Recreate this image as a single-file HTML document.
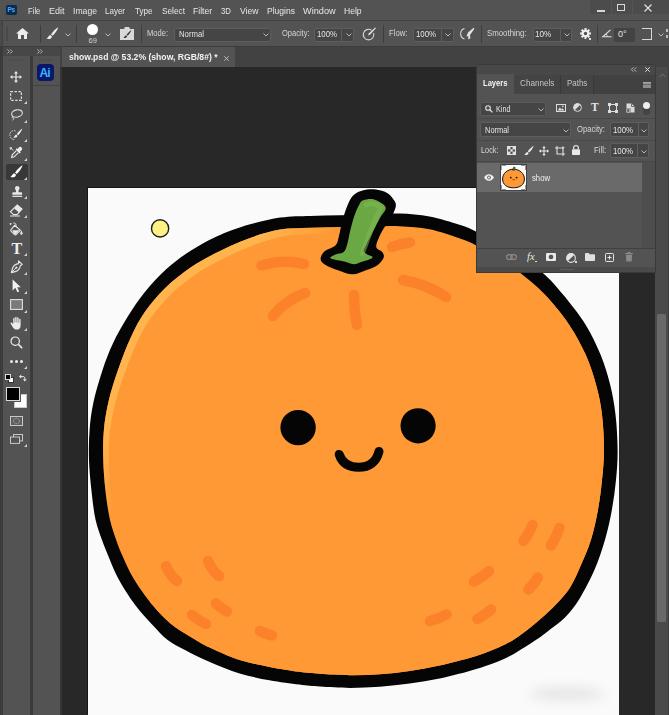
<!DOCTYPE html>
<html><head><meta charset="utf-8"><title>show.psd</title>
<style>
*{box-sizing:border-box;margin:0;padding:0}
html,body{width:669px;height:715px;overflow:hidden;background:#282828}
body{position:relative;font-family:"Liberation Sans",sans-serif;color:#dcdcdc;font-size:9.5px}
.abs{position:absolute}
.t{position:absolute;white-space:nowrap;line-height:1}
svg{position:absolute;overflow:visible}
.fld{position:absolute;background:#454545;border:1px solid #5e5e5e;border-radius:2px}
.sep{position:absolute;width:1px;background:#3e3e3e}
</style></head><body>
<!-- MENU BAR -->
<div class="abs" style="left:0;top:0;width:669px;height:20px;background:#535353"></div>
<div class="abs" style="left:6px;top:5px;width:11px;height:10px;background:#0b2a4e;border-radius:2px"></div>
<div class="t" style="left:7.5px;top:7px;font-size:6.5px;font-weight:bold;color:#48a8ff;letter-spacing:-.3px">Ps</div>
<div class="t" style="top:5.5px;left:28px;font-size:9.6px;color:#e6e6e6;word-spacing:0;transform:scaleX(0.800);transform-origin:0 50%">File</div>
<div class="t" style="top:5.5px;left:49px;font-size:9.6px;color:#e6e6e6;transform:scaleX(0.939);transform-origin:0 50%">Edit</div>
<div class="t" style="top:5.5px;left:73px;font-size:9.6px;color:#e6e6e6;transform:scaleX(0.899);transform-origin:0 50%">Image</div>
<div class="t" style="top:5.5px;left:105px;font-size:9.6px;color:#e6e6e6;transform:scaleX(0.833);transform-origin:0 50%">Layer</div>
<div class="t" style="top:5.5px;left:135px;font-size:9.6px;color:#e6e6e6;transform:scaleX(0.841);transform-origin:0 50%">Type</div>
<div class="t" style="top:5.5px;left:162px;font-size:9.6px;color:#e6e6e6;transform:scaleX(0.861);transform-origin:0 50%">Select</div>
<div class="t" style="top:5.5px;left:193px;font-size:9.6px;color:#e6e6e6;transform:scaleX(0.892);transform-origin:0 50%">Filter</div>
<div class="t" style="top:5.5px;left:221px;font-size:9.6px;color:#e6e6e6;transform:scaleX(0.813);transform-origin:0 50%">3D</div>
<div class="t" style="top:5.5px;left:240px;font-size:9.6px;color:#e6e6e6;transform:scaleX(0.898);transform-origin:0 50%">View</div>
<div class="t" style="top:5.5px;left:267px;font-size:9.6px;color:#e6e6e6;transform:scaleX(0.889);transform-origin:0 50%">Plugins</div>
<div class="t" style="top:5.5px;left:303px;font-size:9.6px;color:#e6e6e6;transform:scaleX(0.956);transform-origin:0 50%">Window</div>
<div class="t" style="top:5.5px;left:344px;font-size:9.6px;color:#e6e6e6;transform:scaleX(0.893);transform-origin:0 50%">Help</div>
<!-- window buttons -->
<div class="abs" style="left:590px;top:0;width:79px;height:14px;background:#4c4c4c"></div>
<div class="abs" style="left:611px;top:0;width:1px;height:14px;background:#555"></div><div class="abs" style="left:632px;top:0;width:1px;height:14px;background:#555"></div>
<div class="abs" style="left:597px;top:10px;width:8px;height:2px;background:#d8d8d8"></div>
<div class="abs" style="left:617px;top:4px;width:8px;height:7px;border:1.5px solid #d8d8d8"></div>
<svg style="left:644px;top:4px" width="8" height="8" viewBox="0 0 8 8"><path d="M.5 .5L7.5 7.5M7.5 .5L.5 7.5" stroke="#e0e0e0" stroke-width="1.2" fill="none"/></svg>

<!-- OPTIONS BAR -->
<div class="abs" style="left:0;top:20px;width:669px;height:27px;background:#535353;border-top:1px solid #424242;border-bottom:1px solid #3c3c3c"></div>
<div class="abs" style="left:0;top:21px;width:2.500px;height:25px;background:#4a4a4a;border-right:1px solid #424242"></div>
<div class="abs" style="left:6px;top:26.500px;width:1.500px;height:14px;background:#494949"></div>
<!-- home -->
<svg style="left:16px;top:28px" width="13" height="11" viewBox="0 0 13 11"><path d="M6.5 0L13 5.6H11V11H8V7H5V11H2V5.6H0Z" fill="#ececec"/></svg>
<div class="sep" style="left:40px;top:25px;height:18px"></div>
<!-- brush tool icon -->
<svg style="left:46px;top:27px" width="13" height="13" viewBox="0 0 13 13"><path d="M12.3 .3C10 1.5 6.5 5 5 7.4L6.6 8.8C8.8 7 11.6 3 12.3 .3Z" fill="#ececec"/><path d="M4.3 8.1C2.5 8.3 2.6 10.6 .5 11.6C2.6 12.6 5.6 12 5.9 9.5Z" fill="#ececec"/></svg>
<svg style="left:65px;top:33px" width="6" height="4" viewBox="0 0 6 4"><path d="M.5 .5L3 3L5.5 .5" stroke="#b8b8b8" stroke-width="1" fill="none"/></svg>
<div class="sep" style="left:76px;top:25px;height:18px"></div>
<!-- brush preset -->
<div class="abs" style="left:87px;top:24px;width:11px;height:11px;border-radius:50%;background:#fff"></div>
<div class="t" style="left:88.5px;top:37px;font-size:7.5px;color:#d0d0d0">69</div>
<svg style="left:105px;top:33px" width="6" height="4" viewBox="0 0 6 4"><path d="M.5 .5L3 3L5.5 .5" stroke="#b8b8b8" stroke-width="1" fill="none"/></svg>
<!-- brush settings icon -->
<svg style="left:120px;top:27px" width="14" height="13" viewBox="0 0 14 13"><path d="M0 2H4L5 0H9L10 2H14V13H0Z" fill="#d9d9d9"/><path d="M11.5 3C9.8 4 7.6 6.2 6.6 7.8L7.6 8.7C9.2 7.4 11 5 11.5 3ZM6 8.3C4.8 8.4 4.9 10 3.4 10.7C4.9 11.3 6.9 10.9 7.1 9.2Z" fill="#3c3c3c"/></svg>
<div class="sep" style="left:141px;top:25px;height:18px"></div>
<div class="t" style="left:147px;top:29px;font-size:9px;color:#d6d6d6;transform:scaleX(0.840);transform-origin:0 50%">Mode:</div>
<div class="fld" style="left:174px;top:27.500px;width:97px;height:14px"></div>
<div class="t" style="left:179px;top:29.5px;font-size:9px;color:#e4e4e4;transform:scaleX(0.862);transform-origin:0 50%">Normal</div>
<svg style="left:263px;top:33px" width="6" height="4" viewBox="0 0 6 4"><path d="M.5 .5L3 3L5.5 .5" stroke="#b8b8b8" stroke-width="1" fill="none"/></svg>
<div class="t" style="left:282px;top:29px;font-size:9px;color:#d6d6d6;transform:scaleX(0.833);transform-origin:0 50%">Opacity:</div>
<div class="fld" style="left:314px;top:27.500px;width:28px;height:14px;border-radius:2px 0 0 2px"></div>
<div class="fld" style="left:342px;top:27.500px;width:12px;height:14px;border-left:0;border-radius:0 2px 2px 0"></div>
<div class="t" style="left:317px;top:29.5px;font-size:9px;color:#e4e4e4;transform:scaleX(0.870);transform-origin:0 50%">100%</div>
<svg style="left:346px;top:33px" width="6" height="4" viewBox="0 0 6 4"><path d="M.5 .5L3 3L5.5 .5" stroke="#b8b8b8" stroke-width="1" fill="none"/></svg>
<!-- pressure opacity icon -->
<svg style="left:362px;top:27px" width="14" height="14" viewBox="0 0 14 14"><path d="M9.5 3.2A5.3 5.3 0 1 0 11.6 6" stroke="#d6d6d6" stroke-width="1.1" fill="none"/><path d="M13.2 .4L7 6.3L5.9 8.6L8.2 7.6L13.9 1.3Z" fill="#e6e6e6"/></svg>
<div class="sep" style="left:383px;top:25px;height:18px"></div>
<div class="t" style="left:389px;top:29px;font-size:9px;color:#d6d6d6;transform:scaleX(0.856);transform-origin:0 50%">Flow:</div>
<div class="fld" style="left:413px;top:27.500px;width:29px;height:14px;border-radius:2px 0 0 2px"></div>
<div class="fld" style="left:442px;top:27.500px;width:12px;height:14px;border-left:0;border-radius:0 2px 2px 0"></div>
<div class="t" style="left:416px;top:29.5px;font-size:9px;color:#e4e4e4;transform:scaleX(0.874);transform-origin:0 50%">100%</div>
<svg style="left:445px;top:33px" width="6" height="4" viewBox="0 0 6 4"><path d="M.5 .5L3 3L5.5 .5" stroke="#b8b8b8" stroke-width="1" fill="none"/></svg>
<!-- airbrush icon -->
<svg style="left:459px;top:27px" width="16" height="14" viewBox="0 0 16 14"><path d="M5.5 1.5A5.5 5.5 0 0 0 5.5 12" stroke="#d6d6d6" stroke-width="1.1" fill="none"/><path d="M14.6 .8L9 5.6L7.4 9.6L9.6 9.2L9 12.2L11.4 11.6L11 8L15.4 1.8Z" fill="#e2e2e2"/></svg>
<div class="sep" style="left:481px;top:25px;height:18px"></div>
<div class="t" style="left:487px;top:29px;font-size:9px;color:#d6d6d6;transform:scaleX(0.870);transform-origin:0 50%">Smoothing:</div>
<div class="fld" style="left:533px;top:27.500px;width:28px;height:14px;border-radius:2px 0 0 2px"></div>
<div class="fld" style="left:561px;top:27.500px;width:11px;height:14px;border-left:0;border-radius:0 2px 2px 0"></div>
<div class="t" style="left:535px;top:29.5px;font-size:9px;color:#e4e4e4;transform:scaleX(0.911);transform-origin:0 50%">10%</div>
<svg style="left:563.5px;top:33px" width="6" height="4" viewBox="0 0 6 4"><path d="M.5 .5L3 3L5.5 .5" stroke="#b8b8b8" stroke-width="1" fill="none"/></svg>
<!-- gear -->
<svg style="left:580px;top:28px" width="11" height="11" viewBox="-5.5 -5.5 11 11"><g fill="#f0f0f0"><circle r="3.6"/><rect x="-1.1" y="-5.4" width="2.2" height="10.8"/><rect x="-1.1" y="-5.4" width="2.2" height="10.8" transform="rotate(45)"/><rect x="-1.1" y="-5.4" width="2.2" height="10.8" transform="rotate(90)"/><rect x="-1.1" y="-5.4" width="2.2" height="10.8" transform="rotate(135)"/></g><circle r="1.7" fill="#535353"/></svg>
<div class="abs" style="left:589px;top:38px;width:2px;height:2px;background:#e0e0e0"></div>
<div class="sep" style="left:597px;top:25px;height:18px"></div>
<!-- angle -->
<svg style="left:602px;top:29px" width="10" height="9" viewBox="0 0 10 9"><path d="M8.5 .8L.8 7.8H9.6" stroke="#e0e0e0" stroke-width="1.1" fill="none"/><path d="M5.2 7.8A3.6 3.6 0 0 0 4 4.9" stroke="#e0e0e0" stroke-width=".9" fill="none"/></svg>
<div class="abs" style="left:614px;top:27.500px;width:21px;height:14px;background:#434343;border-radius:2px"></div>
<div class="t" style="left:618px;top:29.5px;font-size:9px;color:#e4e4e4">0°</div>
<div class="abs" style="left:642px;top:28px;width:9.500px;height:11.500px;border:1.500px solid #d8d8d8;border-left:0"></div>
<svg style="left:658px;top:33px" width="6" height="4" viewBox="0 0 6 4"><path d="M.5 .5L3 3L5.5 .5" stroke="#b8b8b8" stroke-width="1" fill="none"/></svg>
<div class="abs" style="left:666px;top:29px;width:1.500px;height:3px;background:#bbb"></div>
<div class="abs" style="left:666px;top:35px;width:1.500px;height:3px;background:#bbb"></div>

<!-- TAB BAR -->
<div class="abs" style="left:0;top:47px;width:669px;height:20px;background:#424242"></div>
<div class="abs" style="left:62px;top:47px;width:172.500px;height:20px;background:#535353"></div>
<div class="t" style="left:69px;top:53px;font-size:9.2px;font-weight:bold;color:#f2f2f2;transform:scaleX(0.938);transform-origin:0 50%">show.psd @ 53.2% (show, RGB/8#) *</div>
<svg style="left:223.500px;top:55.500px" width="5" height="5" viewBox="0 0 5 5"><path d="M.3 .3L4.7 4.7M4.7 .3L.3 4.7" stroke="#c8c8c8" stroke-width=".9" fill="none"/></svg>
<!-- LEFT TOOLBARS -->
<div class="abs" style="left:0;top:47px;width:60px;height:668px;background:#3b3b3b"></div>
<div class="abs" style="left:3px;top:47px;width:27px;height:668px;background:#535353"></div>
<div class="abs" style="left:32.500px;top:47px;width:27px;height:668px;background:#535353"></div>
<div class="abs" style="left:3px;top:47px;width:57px;height:8.500px;background:#474747"></div>
<svg style="left:7px;top:49px" width="6" height="5" viewBox="0 0 6 5"><path d="M.4 .4L2.4 2.5L.4 4.6M3.2 .4L5.2 2.5L3.2 4.6" stroke="#cfcfcf" stroke-width=".8" fill="none"/></svg>
<svg style="left:36.5px;top:49px" width="6" height="5" viewBox="0 0 6 5"><path d="M.4 .4L2.4 2.5L.4 4.6M3.2 .4L5.2 2.5L3.2 4.6" stroke="#cfcfcf" stroke-width=".8" fill="none"/></svg>
<div class="abs" style="left:9px;top:59px;width:14px;height:2px;background:#4e4e4e"></div>
<div class="abs" style="left:39px;top:59px;width:14px;height:2px;background:#4e4e4e"></div>
<!-- AI plugin icon -->
<div class="abs" style="left:37px;top:64px;width:17px;height:17px;border-radius:4px;background:#08176a"></div>
<div class="t" style="left:39.5px;top:66.5px;font-size:12px;font-weight:bold;color:#35b4ff;letter-spacing:-.8px">Ai</div>
<div class="abs" style="left:32.500px;top:84.500px;width:27px;height:1px;background:#444"></div>

<!-- move -->
<svg style="left:10px;top:71px" width="12" height="12" viewBox="0 0 12 12"><path d="M6 1V11M1 6H11" stroke="#e8e8e8" stroke-width="1.2"/><path d="M6 0L8 2.4H4ZM6 12L4 9.6H8ZM0 6L2.4 4V8ZM12 6L9.6 8V4Z" fill="#e8e8e8"/></svg>
<!-- marquee -->
<svg style="left:10px;top:91px" width="12" height="10" viewBox="0 0 12 10"><rect x=".6" y=".6" width="10.8" height="8.8" fill="none" stroke="#e0e0e0" stroke-width="1.2" stroke-dasharray="2.4 1.5"/></svg>
<!-- lasso -->
<svg style="left:10px;top:109px" width="13" height="12" viewBox="0 0 13 12"><ellipse cx="7" cy="4.4" rx="5.4" ry="3.6" fill="none" stroke="#e0e0e0" stroke-width="1.1" transform="rotate(-12 7 4.4)"/><path d="M3 7.2C1.6 7.6 2 9.2 3.2 8.8C4.2 8.4 3.8 10.4 2.6 11.4" fill="none" stroke="#e0e0e0" stroke-width="1"/></svg>
<!-- quick select -->
<svg style="left:9px;top:128px" width="14" height="13" viewBox="0 0 14 13"><path d="M6.5 3A4 4.4 0 1 0 6 11.2" fill="none" stroke="#d8d8d8" stroke-width="1" stroke-dasharray="1.6 1"/><path d="M13.4 .6C11.6 1.6 9 4.2 7.8 6L9.2 7.2C10.8 5.8 12.8 2.8 13.4 .6Z" fill="#ececec"/><path d="M7.2 6.6C5.8 6.8 5.9 8.6 4.4 9.4C6 10.2 8.3 9.7 8.5 7.8Z" fill="#ececec"/></svg>
<!-- eyedropper -->
<svg style="left:9px;top:146px" width="14" height="14" viewBox="0 0 14 14"><path d="M12.6 1.4C11.6 .4 10.3 .8 9.6 1.8L8.6 3L7.8 2.2L6.6 3.4L10.6 7.4L11.8 6.2L11 5.4L12.2 4.4C13.2 3.7 13.6 2.4 12.6 1.4Z" fill="#ececec"/><path d="M7.4 4.6L3.2 8.8L2.6 11.4L5.2 10.8L9.4 6.6" fill="none" stroke="#ececec" stroke-width="1.1"/><path d="M.6 1.2L3.4 1.6L1.2 4Z" fill="#ececec"/><path d="M2 2.4L4.4 4.6" stroke="#ececec" stroke-width=".9"/></svg>
<!-- brush (selected) -->
<div class="abs" style="left:6px;top:164px;width:22px;height:16px;background:#383838;border-radius:2px"></div>
<svg style="left:10px;top:165px" width="13" height="13" viewBox="0 0 13 13"><path d="M12.6 .2C10.2 1.4 6.6 5 5 7.6L6.6 9C8.9 7.2 11.8 3 12.6 .2Z" fill="#ffffff"/><path d="M4.3 8.3C2.4 8.5 2.6 10.8 .4 11.9C2.6 12.9 5.7 12.3 6 9.7Z" fill="#ffffff"/></svg>
<!-- stamp -->
<svg style="left:11.500px;top:185.500px" width="10.500" height="11.500" viewBox="0 0 12 13"><path d="M6 0C4.3 0 3.4 1.2 3.4 2.4C3.4 3.8 4.6 4.4 4.6 6V7H1.4C.8 7 .4 7.4 .4 8V10H11.6V8C11.6 7.4 11.2 7 10.6 7H7.4V6C7.4 4.4 8.6 3.8 8.6 2.4C8.6 1.2 7.7 0 6 0Z" fill="#e8e8e8"/><rect x=".4" y="11" width="11.2" height="1.4" fill="#e8e8e8"/></svg>
<!-- eraser -->
<svg style="left:9px;top:204px" width="14" height="13" viewBox="0 0 14 13"><path d="M8.2 1L13 5L8 10.6H4.6L1.4 7.8Z" fill="none" stroke="#e8e8e8" stroke-width="1.1"/><path d="M8.2 1L13 5L10 8.4L5.2 4.4Z" fill="#e8e8e8"/><path d="M1 12H11" stroke="#e8e8e8" stroke-width="1"/></svg>
<!-- bucket -->
<svg style="left:9px;top:222px" width="14" height="14" viewBox="0 0 14 14"><path d="M5.6 3.4L11.4 8.4L7.4 12.4C6.8 13 6 13 5.4 12.4L2.2 9.4C1.6 8.8 1.6 8 2.2 7.4Z" fill="none" stroke="#e8e8e8" stroke-width="1.1"/><path d="M3 8.2H10.6L7 12L5.6 12.2Z" fill="#e8e8e8"/><path d="M4.4 1.2C6 .2 7.4 2 7 5" fill="none" stroke="#e8e8e8" stroke-width="1"/><path d="M12.4 8.6C12.4 8.6 13.6 10.6 13.6 11.6A1.2 1.2 0 0 1 11.2 11.6C11.2 10.6 12.4 8.6 12.4 8.6Z" fill="#e8e8e8"/><path d="M.6 1L3 1.4L1.2 3.4Z" fill="#e8e8e8"/></svg>
<!-- type -->
<div class="t" style="left:11.5px;top:240.5px;font-family:'Liberation Serif',serif;font-weight:bold;font-size:16px;color:#ececec">T</div>
<!-- pen -->
<svg style="left:10px;top:260px" width="13" height="14" viewBox="0 0 13 14"><path d="M8.6 .8L12.2 4.4L10.4 5.4C10 8 8.6 10.4 6 11.4L1.4 12.6L2.6 8C3.6 5.4 6 4 8.6 3.6Z" fill="none" stroke="#e8e8e8" stroke-width="1.1" stroke-linejoin="round"/><path d="M1.6 12.4L6 8" stroke="#e8e8e8" stroke-width="1"/><circle cx="6.4" cy="7.6" r="1.1" fill="#e8e8e8"/></svg>
<!-- path select arrow -->
<svg style="left:12px;top:279px" width="9" height="14" viewBox="0 0 9 14"><path d="M.6 .6V11.4L3.4 8.8L5.4 13.2L7.2 12.4L5.2 8.2H8.8Z" fill="#f2f2f2"/></svg>
<!-- rectangle -->
<svg style="left:10px;top:299px" width="13" height="11" viewBox="0 0 13 11"><rect x=".6" y=".6" width="11.8" height="9.8" fill="#7a7a7a" stroke="#e0e0e0" stroke-width="1.1"/></svg>
<!-- hand -->
<svg style="left:10px;top:316px" width="13" height="14" viewBox="0 0 13 14"><path d="M3.2 8V2.6C3.2 1.6 4.6 1.6 4.6 2.6V6.4H5.2V1.4C5.2 .4 6.6 .4 6.6 1.4V6.4H7.2V2C7.2 1 8.6 1 8.6 2V6.8H9.2V3.6C9.2 2.6 10.6 2.6 10.6 3.6V9.4C10.6 12 9.2 13.6 6.8 13.6C4.8 13.6 3.8 12.8 2.8 11.2L.6 7.6C.2 6.8 1.2 6.2 1.8 6.8Z" fill="#ececec"/></svg>
<!-- zoom -->
<svg style="left:10px;top:336px" width="13" height="13" viewBox="0 0 13 13"><circle cx="5.2" cy="5.2" r="4.2" fill="none" stroke="#ececec" stroke-width="1.2"/><path d="M8.4 8.4L12.2 12.2" stroke="#ececec" stroke-width="1.6"/></svg>
<!-- dots -->
<div class="abs" style="left:9.500px;top:359.500px;width:3px;height:3px;border-radius:50%;background:#ececec"></div>
<div class="abs" style="left:14.500px;top:359.500px;width:3px;height:3px;border-radius:50%;background:#ececec"></div>
<div class="abs" style="left:19.500px;top:359.500px;width:3px;height:3px;border-radius:50%;background:#ececec"></div>
<!-- default/swap -->
<div class="abs" style="left:8px;top:377px;width:6px;height:6px;background:#fff;border:1px solid #333"></div>
<div class="abs" style="left:5px;top:374px;width:6px;height:6px;background:#000;border:.6px solid #ddd"></div>
<svg style="left:19px;top:374px" width="8" height="8" viewBox="0 0 8 8"><path d="M1.4 2.6H4.4C5.6 2.6 5.8 3.4 5.8 5.4" fill="none" stroke="#ececec" stroke-width="1"/><path d="M0 2.6L2.2 .6V4.6ZM5.8 7.6L3.9 5.2H7.7Z" fill="#ececec"/></svg>
<!-- fg/bg colors -->
<div class="abs" style="left:14px;top:394px;width:13px;height:14px;background:#fff;border:1px solid #c8c8c8"></div>
<div class="abs" style="left:6px;top:387px;width:14px;height:14px;background:#000;border:1px solid #d8d8d8;box-shadow:0 0 0 1px #535353"></div>
<!-- quick mask -->
<svg style="left:10px;top:416px" width="13" height="10" viewBox="0 0 13 10"><rect x=".5" y=".5" width="12" height="9" fill="#5e5e5e" stroke="#c8c8c8" stroke-width="1"/><ellipse cx="6.5" cy="5" rx="3" ry="2.6" fill="none" stroke="#c8c8c8" stroke-width=".8" stroke-dasharray="1 .8"/></svg>
<!-- screen mode -->
<svg style="left:10px;top:434px" width="13" height="10" viewBox="0 0 13 10"><rect x="3.5" y=".5" width="9" height="6.4" fill="none" stroke="#c8c8c8" stroke-width="1"/><rect x=".5" y="3" width="9" height="6.4" fill="#535353" stroke="#c8c8c8" stroke-width="1"/></svg>
<!-- small corner triangles -->
<svg style="left:0;top:0" width="32" height="460" viewBox="0 0 32 460"><g fill="#d0d0d0"><path d="M27 101v3h-3z"/><path d="M27 120v3h-3z"/><path d="M27 139v3h-3z"/><path d="M27 158v3h-3z"/><path d="M27 177v3h-3z"/><path d="M27 196v3h-3z"/><path d="M27 215v3h-3z"/><path d="M27 253v3h-3z"/><path d="M27 272v3h-3z"/><path d="M27 291v3h-3z"/><path d="M27 310v3h-3z"/><path d="M27 328v3h-3z"/><path d="M27 366v3h-3z"/><path d="M27 444v3h-3z"/></g></svg>
<!-- CANVAS -->
<div class="abs" style="left:60px;top:67px;width:595px;height:648px;background:#282828;border-left:2px solid #363636"></div>
<div class="abs" style="left:88px;top:188px;width:530.500px;height:527px;background:#fafafa;box-shadow:-1px -1px 0 #151515"></div>
<svg style="left:0;top:0" width="669" height="715" viewBox="0 0 669 715">
<defs>
<clipPath id="doc"><rect x="88" y="188" width="530.5" height="527"/></clipPath>
<clipPath id="bodyclip"><path d="M280.0 229.6C290.4 227.8 300.0 228.2 310.0 227.8C320.0 227.4 330.0 227.2 340.0 227.0C350.0 226.8 360.1 226.6 370.0 226.5C379.9 226.4 389.7 225.8 399.6 226.3C409.5 226.8 419.5 227.3 429.5 229.3C439.5 231.3 451.7 235.7 459.4 238.3C467.1 241.0 469.4 242.0 475.8 245.2C482.2 248.4 490.7 253.0 498.0 257.5C505.3 262.0 511.9 266.2 519.8 272.4C527.7 278.6 537.0 286.1 545.2 294.8C553.4 303.5 562.4 314.7 569.1 324.7C575.8 334.7 581.1 344.6 585.6 354.6C590.1 364.6 593.3 374.5 596.0 384.5C598.7 394.5 600.7 403.5 602.0 414.4C603.3 425.3 604.0 439.1 604.0 450.0C604.0 460.9 603.0 470.0 602.0 480.0C601.0 490.0 599.8 499.9 598.0 509.8C596.2 519.8 593.9 530.3 591.0 539.7C588.1 549.1 583.9 558.2 580.5 566.0C577.1 573.8 574.3 580.5 570.7 586.4C567.1 592.3 563.0 596.7 558.8 601.4C554.6 606.1 550.0 610.4 545.3 614.8C540.6 619.1 535.1 623.7 530.4 627.5C525.7 631.3 521.2 634.7 517.0 637.5C512.8 640.3 509.5 642.3 505.0 644.5C500.5 646.7 495.9 648.6 490.0 650.9C484.1 653.1 477.9 655.6 469.5 658.0C461.1 660.4 449.6 663.3 439.6 665.5C429.6 667.7 419.7 669.5 409.7 671.0C399.7 672.5 389.8 673.6 379.8 674.3C369.9 675.0 360.0 675.3 350.0 675.2C340.0 675.1 328.4 674.4 320.0 673.8C311.6 673.2 307.8 672.9 299.4 671.8C291.0 670.6 279.5 668.9 269.5 666.9C259.5 664.9 249.6 663.2 239.6 660.0C229.6 656.8 218.0 651.4 209.7 647.5C201.4 643.6 196.5 640.4 190.0 636.4C183.5 632.4 176.6 628.6 170.7 623.7C164.8 618.9 159.2 612.8 154.3 607.3C149.5 601.8 145.6 596.5 141.6 590.8C137.6 585.1 133.7 578.9 130.4 572.9C127.2 566.9 124.5 560.5 122.1 555.0C119.7 549.5 118.2 545.9 116.2 540.0C114.2 534.1 111.7 527.9 109.9 519.6C108.1 511.3 106.5 499.9 105.4 490.0C104.3 480.1 103.5 470.0 103.3 460.0C103.0 450.0 103.0 440.0 103.9 430.0C104.8 420.0 106.4 410.4 108.9 400.0C111.4 389.6 115.2 377.8 118.9 367.4C122.6 357.0 126.5 346.7 130.8 337.5C135.1 328.3 139.1 320.3 144.8 312.1C150.5 303.9 157.3 295.7 165.0 288.2C172.7 280.7 182.2 273.3 191.0 267.3C199.8 261.3 208.1 257.0 217.5 252.3C226.9 247.6 237.0 242.7 247.4 238.9C257.8 235.1 269.6 231.4 280.0 229.6Z"/></clipPath>
<filter id="soft" x="-30%" y="-60%" width="160%" height="220%"><feGaussianBlur stdDeviation="6"/></filter>
<filter id="soft2" x="-10%" y="-10%" width="120%" height="120%"><feGaussianBlur stdDeviation=".7"/></filter>
<linearGradient id="rimfade" gradientUnits="userSpaceOnUse" x1="0" y1="0" x2="393" y2="309.500"><stop offset="0" stop-color="#fff"/><stop offset=".7" stop-color="#fff"/><stop offset=".82" stop-color="#000"/></linearGradient>
<mask id="rimmask" maskUnits="userSpaceOnUse" x="0" y="0" width="669" height="715"><rect x="0" y="0" width="669" height="715" fill="url(#rimfade)"/></mask>
</defs>
<g clip-path="url(#doc)">
<!-- faint shadow bottom right -->
<ellipse cx="567" cy="694" rx="38" ry="7" fill="#e6e6e6" filter="url(#soft)"/>
<!-- body -->
<path d="M280.0 217.6C291.4 215.8 300.0 216.3 310.0 215.9C320.0 215.5 330.0 215.6 340.0 215.3C350.0 215.1 360.1 214.7 370.0 214.4C379.9 214.1 389.7 213.2 399.6 213.5C409.5 213.8 419.5 214.6 429.5 216.5C439.5 218.4 451.7 222.3 459.4 224.8C467.1 227.3 467.4 227.3 475.8 231.4C484.2 235.5 498.9 242.7 510.0 249.5C521.1 256.3 533.3 264.8 542.2 272.4C551.1 279.9 556.0 286.1 563.2 294.8C570.4 303.5 579.4 314.7 585.6 324.7C591.8 334.7 596.4 344.6 600.5 354.6C604.6 364.6 607.6 374.5 610.1 384.5C612.6 394.5 614.2 403.5 615.5 414.4C616.8 425.3 617.5 439.1 617.6 450.0C617.7 460.9 617.0 470.0 616.0 480.0C615.0 490.0 613.7 499.9 611.9 509.8C610.1 519.8 607.9 529.7 605.0 539.7C602.1 549.7 598.8 559.8 594.6 569.6C590.4 579.4 584.7 590.4 579.7 598.4C574.7 606.4 569.7 612.6 564.7 617.8C559.8 623.0 554.2 626.2 550.0 629.5C545.8 632.8 544.8 634.0 539.3 637.8C533.8 641.5 522.7 648.5 517.0 652.0C511.3 655.5 509.5 656.4 505.0 658.5C500.5 660.6 495.9 662.3 490.0 664.4C484.1 666.5 477.9 668.6 469.5 671.0C461.1 673.4 449.6 676.4 439.6 678.5C429.6 680.6 419.7 682.2 409.7 683.6C399.7 685.0 389.8 686.1 379.8 686.8C369.9 687.5 360.0 687.9 350.0 687.9C340.0 687.9 328.4 687.1 320.0 686.6C311.6 686.1 307.8 685.7 299.4 684.6C291.0 683.5 279.5 682.2 269.5 680.3C259.5 678.4 249.6 676.4 239.6 673.4C229.6 670.4 218.8 665.9 209.7 662.0C200.6 658.1 192.0 653.7 185.0 650.0C178.0 646.3 173.1 644.1 167.7 640.0C162.3 635.9 157.5 630.2 152.8 625.2C148.1 620.2 143.5 615.5 139.3 610.3C135.1 605.1 131.2 599.8 127.4 593.8C123.6 587.8 119.5 580.9 116.2 574.4C113.0 567.9 110.3 560.7 107.9 555.0C105.5 549.3 104.1 545.9 102.0 540.0C99.9 534.1 97.3 527.9 95.5 519.6C93.7 511.3 92.5 499.9 91.4 490.0C90.3 480.1 89.3 470.0 89.0 460.0C88.7 450.0 88.8 439.7 89.6 430.0C90.3 420.3 91.4 411.9 93.5 402.0C95.6 392.1 99.2 380.1 102.4 370.4C105.6 360.6 108.7 352.5 112.9 343.5C117.1 334.5 122.6 325.1 127.8 316.6C133.0 308.1 137.8 300.7 144.3 292.7C150.8 284.7 159.0 275.8 166.7 268.8C174.4 261.8 182.6 256.0 190.6 250.8C198.6 245.6 206.0 241.4 214.5 237.4C223.0 233.4 230.5 230.2 241.4 226.9C252.3 223.6 268.6 219.4 280.0 217.6Z" fill="#050505"/>
<path d="M280.0 229.6C290.4 227.8 300.0 228.2 310.0 227.8C320.0 227.4 330.0 227.2 340.0 227.0C350.0 226.8 360.1 226.6 370.0 226.5C379.9 226.4 389.7 225.8 399.6 226.3C409.5 226.8 419.5 227.3 429.5 229.3C439.5 231.3 451.7 235.7 459.4 238.3C467.1 241.0 469.4 242.0 475.8 245.2C482.2 248.4 490.7 253.0 498.0 257.5C505.3 262.0 511.9 266.2 519.8 272.4C527.7 278.6 537.0 286.1 545.2 294.8C553.4 303.5 562.4 314.7 569.1 324.7C575.8 334.7 581.1 344.6 585.6 354.6C590.1 364.6 593.3 374.5 596.0 384.5C598.7 394.5 600.7 403.5 602.0 414.4C603.3 425.3 604.0 439.1 604.0 450.0C604.0 460.9 603.0 470.0 602.0 480.0C601.0 490.0 599.8 499.9 598.0 509.8C596.2 519.8 593.9 530.3 591.0 539.7C588.1 549.1 583.9 558.2 580.5 566.0C577.1 573.8 574.3 580.5 570.7 586.4C567.1 592.3 563.0 596.7 558.8 601.4C554.6 606.1 550.0 610.4 545.3 614.8C540.6 619.1 535.1 623.7 530.4 627.5C525.7 631.3 521.2 634.7 517.0 637.5C512.8 640.3 509.5 642.3 505.0 644.5C500.5 646.7 495.9 648.6 490.0 650.9C484.1 653.1 477.9 655.6 469.5 658.0C461.1 660.4 449.6 663.3 439.6 665.5C429.6 667.7 419.7 669.5 409.7 671.0C399.7 672.5 389.8 673.6 379.8 674.3C369.9 675.0 360.0 675.3 350.0 675.2C340.0 675.1 328.4 674.4 320.0 673.8C311.6 673.2 307.8 672.9 299.4 671.8C291.0 670.6 279.5 668.9 269.5 666.9C259.5 664.9 249.6 663.2 239.6 660.0C229.6 656.8 218.0 651.4 209.7 647.5C201.4 643.6 196.5 640.4 190.0 636.4C183.5 632.4 176.6 628.6 170.7 623.7C164.8 618.9 159.2 612.8 154.3 607.3C149.5 601.8 145.6 596.5 141.6 590.8C137.6 585.1 133.7 578.9 130.4 572.9C127.2 566.9 124.5 560.5 122.1 555.0C119.7 549.5 118.2 545.9 116.2 540.0C114.2 534.1 111.7 527.9 109.9 519.6C108.1 511.3 106.5 499.9 105.4 490.0C104.3 480.1 103.5 470.0 103.3 460.0C103.0 450.0 103.0 440.0 103.9 430.0C104.8 420.0 106.4 410.4 108.9 400.0C111.4 389.6 115.2 377.8 118.9 367.4C122.6 357.0 126.5 346.7 130.8 337.5C135.1 328.3 139.1 320.3 144.8 312.1C150.5 303.9 157.3 295.7 165.0 288.2C172.7 280.7 182.2 273.3 191.0 267.3C199.8 261.3 208.1 257.0 217.5 252.3C226.9 247.6 237.0 242.7 247.4 238.9C257.8 235.1 269.6 231.4 280.0 229.6Z" fill="#ff9935"/>
<g clip-path="url(#bodyclip)">
<!-- light rim upper-left -->
<g mask="url(#rimmask)"><rect x="88" y="188" width="531" height="527" fill="#ffb44d"/></g>
<path d="M280.0 229.6C290.4 227.8 300.0 228.2 310.0 227.8C320.0 227.4 330.0 227.2 340.0 227.0C350.0 226.8 360.1 226.6 370.0 226.5C379.9 226.4 389.7 225.8 399.6 226.3C409.5 226.8 419.5 227.3 429.5 229.3C439.5 231.3 451.7 235.7 459.4 238.3C467.1 241.0 469.4 242.0 475.8 245.2C482.2 248.4 490.7 253.0 498.0 257.5C505.3 262.0 511.9 266.2 519.8 272.4C527.7 278.6 537.0 286.1 545.2 294.8C553.4 303.5 562.4 314.7 569.1 324.7C575.8 334.7 581.1 344.6 585.6 354.6C590.1 364.6 593.3 374.5 596.0 384.5C598.7 394.5 600.7 403.5 602.0 414.4C603.3 425.3 604.0 439.1 604.0 450.0C604.0 460.9 603.0 470.0 602.0 480.0C601.0 490.0 599.8 499.9 598.0 509.8C596.2 519.8 593.9 530.3 591.0 539.7C588.1 549.1 583.9 558.2 580.5 566.0C577.1 573.8 574.3 580.5 570.7 586.4C567.1 592.3 563.0 596.7 558.8 601.4C554.6 606.1 550.0 610.4 545.3 614.8C540.6 619.1 535.1 623.7 530.4 627.5C525.7 631.3 521.2 634.7 517.0 637.5C512.8 640.3 509.5 642.3 505.0 644.5C500.5 646.7 495.9 648.6 490.0 650.9C484.1 653.1 477.9 655.6 469.5 658.0C461.1 660.4 449.6 663.3 439.6 665.5C429.6 667.7 419.7 669.5 409.7 671.0C399.7 672.5 389.8 673.6 379.8 674.3C369.9 675.0 360.0 675.3 350.0 675.2C340.0 675.1 328.4 674.4 320.0 673.8C311.6 673.2 307.8 672.9 299.4 671.8C291.0 670.6 279.5 668.9 269.5 666.9C259.5 664.9 249.6 663.2 239.6 660.0C229.6 656.8 218.0 651.4 209.7 647.5C201.4 643.6 196.5 640.4 190.0 636.4C183.5 632.4 176.6 628.6 170.7 623.7C164.8 618.9 159.2 612.8 154.3 607.3C149.5 601.8 145.6 596.5 141.6 590.8C137.6 585.1 133.7 578.9 130.4 572.9C127.2 566.9 124.5 560.5 122.1 555.0C119.7 549.5 118.2 545.9 116.2 540.0C114.2 534.1 111.7 527.9 109.9 519.6C108.1 511.3 106.5 499.9 105.4 490.0C104.3 480.1 103.5 470.0 103.3 460.0C103.0 450.0 103.0 440.0 103.9 430.0C104.8 420.0 106.4 410.4 108.9 400.0C111.4 389.6 115.2 377.8 118.9 367.4C122.6 357.0 126.5 346.7 130.8 337.5C135.1 328.3 139.1 320.3 144.8 312.1C150.5 303.9 157.3 295.7 165.0 288.2C172.7 280.7 182.2 273.3 191.0 267.3C199.8 261.3 208.1 257.0 217.5 252.3C226.9 247.6 237.0 242.7 247.4 238.9C257.8 235.1 269.6 231.4 280.0 229.6Z" transform="translate(5.500,6.500)" fill="#ff9935"/>
<!-- rind marks -->
<g stroke="#fb812a" stroke-width="10.500" stroke-linecap="round" fill="none">
<path d="M261.500 265.500C276 261.300 291 260.800 304 264"/>
<path d="M273 316C281 305.500 292 298 305 293"/>
<path d="M354 295C354 305 355 316 357 325"/>
<path d="M392 247C398 244.500 405 243 410 242.500"/>
<path d="M403 280C419 283 434 289 446 297"/>
<path d="M166 566C169 573 173 578 177 581"/>
<path d="M208 561C211 568 215 573 219 576"/>
<path d="M216 603.500C220 607 223 609.500 227 611.500"/>
<path d="M192 615C197 619 201 622 206 624"/>
<path d="M260 631C264 633 268 634.500 272 635.500"/>
<path d="M532.500 525C530 531 527 536.500 523.500 541"/>
<path d="M559.500 528C557 535 554 541 551 545.500"/>
<path d="M489 571C484 575.500 479 579 474 581.500"/>
<path d="M538 577.500C535 582 532 586 528.500 589.500"/>
<path d="M491 609.500C487 613 482 616.500 477.500 619"/>
<path d="M446.500 614.500C441 617.500 435.500 619.500 430 621"/>
</g>
</g>
<!-- stem -->
<path d="M362.6 190.4C365.9 189.5 370.0 188.9 374.1 189.3C378.2 189.7 383.8 190.9 387.2 192.9C390.6 194.9 393.2 198.6 394.6 201.1C396.0 203.6 396.2 204.8 395.5 207.7C394.8 210.6 392.7 214.6 390.5 218.4C388.3 222.2 384.7 226.0 382.3 230.7C379.9 235.3 376.2 242.7 376.2 246.3C376.2 249.9 381.1 250.2 382.3 252.1C383.5 254.0 384.4 255.6 383.6 257.8C382.8 260.0 380.3 263.1 377.4 265.2C374.4 267.3 370.0 268.7 365.9 270.2C361.8 271.7 357.4 274.3 352.7 274.3C348.0 274.3 342.6 271.9 337.9 270.2C333.2 268.5 327.6 266.3 324.7 264.4C321.8 262.5 320.6 260.9 320.6 258.7C320.6 256.5 322.2 253.5 324.7 251.3C327.2 249.1 333.1 247.8 335.4 245.5C337.7 243.2 337.5 241.7 338.7 237.3C339.9 232.9 341.1 225.0 342.8 219.2C344.5 213.4 346.7 206.8 348.6 202.7C350.5 198.6 352.0 196.6 354.3 194.5C356.6 192.4 359.3 191.3 362.6 190.4Z" fill="#050505"/>
<path d="M363.4 200.3C365.9 199.5 370.4 198.4 374.1 199.6C377.8 200.8 384.6 204.2 385.6 207.2C386.6 210.2 382.4 213.3 380.2 217.5C378.0 221.7 374.9 227.9 372.6 232.3C370.3 236.7 368.1 240.8 366.6 243.9C365.1 247.0 363.6 249.1 363.6 250.8C363.7 252.5 365.4 253.2 366.9 254.2C368.4 255.2 372.2 256.0 372.6 256.9C373.0 257.8 371.1 258.6 369.1 259.5C367.2 260.4 363.4 261.2 360.9 262.0C358.4 262.8 356.8 264.3 354.3 264.3C351.8 264.3 348.8 262.7 346.1 262.0C343.4 261.3 340.5 261.0 337.9 260.3C335.3 259.6 330.6 258.9 330.3 257.9C330.0 256.9 334.0 255.2 336.2 254.3C338.4 253.4 341.6 253.8 343.4 252.3C345.2 250.8 345.8 249.1 346.9 245.5C348.0 241.9 349.0 235.6 350.2 230.7C351.4 225.8 352.8 220.3 354.3 215.9C355.8 211.5 357.8 207.0 359.3 204.4C360.8 201.8 360.9 201.1 363.4 200.3Z" fill="#6aa843"/>
<path d="M366 205C370 202.500 376 203.500 381 207.500C377 215 372 226 368 238C366 244 364 249 362 254" stroke="#7fb856" stroke-width="5" stroke-linecap="round" fill="none" opacity=".55"/>
<!-- face -->
<circle cx="298.100" cy="427.600" r="17.700" fill="#050505"/>
<circle cx="418.100" cy="425.800" r="17.600" fill="#050505"/>
<path d="M339.200 454.400C342 463 349 467.300 358.700 467.300C369 467.300 376.500 462 379 451.400" fill="none" stroke="#050505" stroke-width="9" stroke-linecap="round"/>
</g>
<!-- brush cursor -->
<circle cx="160.100" cy="228.400" r="8.600" fill="#fff183" stroke="#1e1e16" stroke-width="1.400"/>
</svg>
<!-- vertical scrollbar -->
<div class="abs" style="left:655px;top:67px;width:14px;height:648px;background:#4a4a4a"></div>
<div class="abs" style="left:667.500px;top:67px;width:1.500px;height:648px;background:#3c3c3c"></div>
<div class="abs" style="left:656.500px;top:314px;width:9px;height:308px;background:#696969;border-radius:1.500px"></div>
<svg style="left:658.500px;top:73px" width="7" height="5" viewBox="0 0 7 5"><path d="M.5 4.200L3.500 1L6.500 4.200" stroke="#747474" stroke-width="1" fill="none"/></svg>
<!-- LAYERS PANEL -->
<div class="abs" style="left:477px;top:65px;width:178px;height:207px;background:#535353;border-radius:3px 3px 0 0;box-shadow:0 0 0 1px #3a3a3a"></div>
<div class="abs" style="left:477px;top:65px;width:178px;height:29px;background:#484848;border-radius:3px 3px 0 0"></div>
<div class="abs" style="left:477px;top:74.500px;width:178px;height:19.500px;background:#414141"></div>
<svg style="left:631px;top:67px" width="6" height="5" viewBox="0 0 6 5"><path d="M2.4 .4L.4 2.500L2.4 4.600M5.200 .4L3.200 2.500L5.200 4.600" stroke="#cfcfcf" stroke-width=".8" fill="none"/></svg>
<svg style="left:645px;top:67px" width="5" height="5" viewBox="0 0 5 5"><path d="M.3 .3L4.700 4.700M4.700 .3L.3 4.700" stroke="#e0e0e0" stroke-width="1" fill="none"/></svg>
<!-- tabs -->
<div class="abs" style="left:477px;top:74px;width:37px;height:20px;background:#535353"></div>
<div class="abs" style="left:514px;top:74.500px;width:47px;height:19px;background:#444;border-right:1px solid #393939"></div>
<div class="abs" style="left:561px;top:74.500px;width:33px;height:19px;background:#444;border-right:1px solid #393939"></div>
<div class="t" style="left:483px;top:79px;font-size:9px;font-weight:bold;color:#f4f4f4;transform:scaleX(0.845);transform-origin:0 50%">Layers</div>
<div class="t" style="left:520px;top:79px;font-size:9px;color:#c4c4c4;transform:scaleX(0.905);transform-origin:0 50%">Channels</div>
<div class="t" style="left:567px;top:79px;font-size:9px;color:#c4c4c4;transform:scaleX(0.883);transform-origin:0 50%">Paths</div>
<div class="abs" style="left:643px;top:82px;width:7.500px;height:5.500px;background:#8e8e8e;border-top:1px solid #a8a8a8"></div><div class="abs" style="left:643px;top:84.300px;width:7.500px;height:.7px;background:#6a6a6a"></div>
<!-- filter row -->
<div class="fld" style="left:480px;top:102px;width:66px;height:14px;background:#454545;border-color:#5a5a5a"></div>
<svg style="left:485px;top:105px" width="8" height="8" viewBox="0 0 8 8"><circle cx="3" cy="3" r="2.300" fill="none" stroke="#e4e4e4" stroke-width="1.100"/><path d="M4.800 4.800L7.400 7.400" stroke="#e4e4e4" stroke-width="1.300"/></svg>
<div class="t" style="left:495.500px;top:104.500px;font-size:9px;color:#e6e6e6;transform:scaleX(0.800);transform-origin:0 50%">Kind</div>
<svg style="left:538px;top:108px" width="6" height="4" viewBox="0 0 6 4"><path d="M.5 .5L3 3L5.500 .5" stroke="#b8b8b8" stroke-width="1" fill="none"/></svg>
<svg style="left:556px;top:104px" width="10" height="8" viewBox="0 0 10 8"><rect x=".5" y=".5" width="9" height="7" fill="none" stroke="#dcdcdc" stroke-width="1"/><path d="M1.600 6.400L3.800 3.600L5.400 5.200L6.600 4.200L8.400 6.400Z" fill="#dcdcdc"/><circle cx="6.800" cy="2.400" r=".8" fill="#dcdcdc"/></svg>
<svg style="left:573px;top:103px" width="9" height="9" viewBox="0 0 9 9"><circle cx="4.500" cy="4.500" r="3.900" fill="none" stroke="#dcdcdc" stroke-width="1"/><path d="M1.700 7.300A3.900 3.900 0 0 1 7.300 1.700Z" fill="#dcdcdc"/></svg>
<div class="t" style="left:591px;top:102px;font-family:'Liberation Serif',serif;font-weight:bold;font-size:11.500px;color:#e6e6e6">T</div>
<svg style="left:608px;top:103px" width="10" height="10" viewBox="0 0 10 10"><rect x="1.500" y="1.500" width="7" height="7" fill="none" stroke="#dcdcdc" stroke-width="1"/><g fill="#dcdcdc"><rect x="0" y="0" width="3" height="3"/><rect x="7" y="0" width="3" height="3"/><rect x="0" y="7" width="3" height="3"/><rect x="7" y="7" width="3" height="3"/></g></svg>
<svg style="left:626px;top:103px" width="9" height="10" viewBox="0 0 9 10"><path d="M.5 .5H5.500L8.500 3.500V9.500H.5Z" fill="#dcdcdc"/><path d="M5.500 .5V3.500H8.500" fill="none" stroke="#535353" stroke-width=".8"/><rect x="0" y="5" width="4.500" height="5" fill="#535353"/><rect x=".8" y="5.800" width="3" height="3.400" fill="none" stroke="#dcdcdc" stroke-width=".8"/></svg>
<div class="abs" style="left:643px;top:102px;width:7px;height:13px;border-radius:3.500px;background:#444"></div>
<div class="abs" style="left:643px;top:101.500px;width:7px;height:7px;border-radius:50%;background:#f0f0f0"></div>
<!-- blend row -->
<div class="abs" style="left:477px;top:118px;width:178px;height:1px;background:#484848"></div>
<div class="fld" style="left:480px;top:122px;width:91px;height:15px"></div>
<div class="t" style="left:485px;top:125.500px;font-size:9px;color:#e6e6e6;transform:scaleX(0.828);transform-origin:0 50%">Normal</div>
<svg style="left:563px;top:129px" width="6" height="4" viewBox="0 0 6 4"><path d="M.5 .5L3 3L5.500 .5" stroke="#b8b8b8" stroke-width="1" fill="none"/></svg>
<div class="t" style="left:577px;top:125px;font-size:9px;color:#d6d6d6;transform:scaleX(0.848);transform-origin:0 50%">Opacity:</div>
<div class="fld" style="left:610px;top:122px;width:29px;height:15px;border-radius:2px 0 0 2px"></div>
<div class="fld" style="left:639px;top:122px;width:10px;height:15px;border-left:0;border-radius:0 2px 2px 0"></div>
<div class="t" style="left:612.500px;top:125.500px;font-size:9px;color:#e6e6e6;transform:scaleX(0.870);transform-origin:0 50%">100%</div>
<svg style="left:641px;top:128.500px" width="6" height="4" viewBox="0 0 6 4"><path d="M.5 .5L3 3L5.500 .5" stroke="#b8b8b8" stroke-width="1" fill="none"/></svg>
<!-- lock row -->
<div class="abs" style="left:477px;top:140px;width:178px;height:1px;background:#484848"></div>
<div class="t" style="left:481px;top:146px;font-size:9px;color:#d6d6d6;transform:scaleX(0.814);transform-origin:0 50%">Lock:</div>
<svg style="left:507px;top:146px" width="9" height="9" viewBox="0 0 9 9"><rect x=".5" y=".5" width="8" height="8" fill="none" stroke="#e0e0e0" stroke-width="1"/><g fill="#e0e0e0"><rect x="1" y="1" width="2.400" height="2.400"/><rect x="5.600" y="1" width="2.400" height="2.400"/><rect x="3.300" y="3.300" width="2.400" height="2.400"/><rect x="1" y="5.600" width="2.400" height="2.400"/><rect x="5.600" y="5.600" width="2.400" height="2.400"/></g></svg>
<svg style="left:524px;top:145px" width="10" height="11" viewBox="0 0 13 13"><path d="M12.600 .2C10.200 1.400 6.600 5 5 7.600L6.600 9C8.900 7.200 11.800 3 12.600 .2Z" fill="#ececec"/><path d="M4.300 8.300C2.400 8.500 2.600 10.800 .4 11.900C2.600 12.900 5.700 12.300 6 9.700Z" fill="#ececec"/></svg>
<svg style="left:539px;top:146px" width="10" height="10" viewBox="0 0 12 12"><path d="M6 1V11M1 6H11" stroke="#e8e8e8" stroke-width="1.300"/><path d="M6 0L8 2.400H4ZM6 12L4 9.600H8ZM0 6L2.400 4V8ZM12 6L9.600 8V4Z" fill="#e8e8e8"/></svg>
<svg style="left:555px;top:146px" width="10" height="10" viewBox="0 0 10 10"><path d="M2 0V8H10M0 2H8V10" fill="none" stroke="#e0e0e0" stroke-width="1.100"/><path d="M7 .2L9.800 1.500L7.600 3Z" fill="#e0e0e0"/></svg>
<svg style="left:572px;top:145px" width="8" height="10" viewBox="0 0 8 10"><rect x="0" y="4.200" width="8" height="5.800" rx=".8" fill="#e8e8e8"/><path d="M1.700 4.500V2.800A2.300 2.300 0 0 1 6.300 2.800V4.500" fill="none" stroke="#e8e8e8" stroke-width="1.200"/></svg>
<div class="t" style="left:594px;top:146px;font-size:9px;color:#d6d6d6;transform:scaleX(0.879);transform-origin:0 50%">Fill:</div>
<div class="fld" style="left:610px;top:143px;width:28px;height:15px;border-radius:2px 0 0 2px"></div>
<div class="fld" style="left:638px;top:143px;width:11px;height:15px;border-left:0;border-radius:0 2px 2px 0"></div>
<div class="t" style="left:612.500px;top:146.500px;font-size:9px;color:#e6e6e6;transform:scaleX(0.870);transform-origin:0 50%">100%</div>
<svg style="left:640.500px;top:149.500px" width="6" height="4" viewBox="0 0 6 4"><path d="M.5 .5L3 3L5.500 .5" stroke="#b8b8b8" stroke-width="1" fill="none"/></svg>
<!-- layer list -->
<div class="abs" style="left:477px;top:161px;width:178px;height:1px;background:#484848"></div>
<div class="abs" style="left:477px;top:163px;width:165px;height:29px;background:#6a6a6a"></div>
<div class="abs" style="left:642px;top:162px;width:13px;height:86px;background:#4e4e4e"></div>
<svg style="left:484px;top:174px" width="10" height="7" viewBox="0 0 10 7"><path d="M0 3.500C1.500 1 3.200 .2 5 .2C6.800 .2 8.500 1 10 3.500C8.500 6 6.800 6.800 5 6.800C3.200 6.800 1.500 6 0 3.500Z" fill="#f0f0f0"/><circle cx="5" cy="3.500" r="1.900" fill="#6a6a6a"/><circle cx="5" cy="3.500" r="1" fill="#f0f0f0"/></svg>
<div class="abs" style="left:500px;top:164px;width:27px;height:27px;background:#fbfbfb;border:1px solid #444"></div>
<svg style="left:500px;top:164px" width="27" height="27" viewBox="0 0 27 27"><path d="M13.500 5.200C19.500 5.200 24.400 9.400 24.400 15C24.400 20.600 20 23.800 13.500 23.800C7 23.800 2.600 20.600 2.600 15C2.600 9.400 7.500 5.200 13.500 5.200Z" fill="#ff9935" stroke="#111" stroke-width="1"/><path d="M12.600 6.200L13.600 3.200L15.200 3.400L14.400 6.200Z" fill="#5a9a38" stroke="#111" stroke-width=".6"/><circle cx="10.800" cy="13.600" r=".9" fill="#111"/><circle cx="16.600" cy="13.600" r=".9" fill="#111"/><path d="M12.600 15.200C13.200 16.200 14.400 16.200 15 15.200" stroke="#111" stroke-width=".6" fill="none"/><path d="M1.500 6V1.500H6M21 1.500H25.500V6M25.500 21V25.500H21M6 25.500H1.500V21" fill="none" stroke="#8a8a8a" stroke-width=".9"/></svg>
<div class="t" style="left:531.500px;top:173.500px;font-size:8.600px;color:#f0f0f0;transform:scaleX(0.900);transform-origin:0 50%">show</div>
<!-- bottom bar -->
<div class="abs" style="left:477px;top:247.500px;width:178px;height:1px;background:#404040"></div>
<svg style="left:506px;top:254px" width="11" height="6" viewBox="0 0 11 6"><rect x=".6" y=".6" width="5.600" height="4.800" rx="2.400" fill="none" stroke="#8c8c8c" stroke-width="1.100"/><rect x="4.800" y=".6" width="5.600" height="4.800" rx="2.400" fill="none" stroke="#8c8c8c" stroke-width="1.100"/></svg>
<div class="t" style="left:527px;top:251.500px;font-size:10.500px;font-style:italic;font-family:'Liberation Serif',serif;color:#e8e8e8">fx</div>
<div class="abs" style="left:535px;top:260.500px;width:2px;height:1.500px;background:#ddd"></div>
<svg style="left:546px;top:253px" width="10" height="8" viewBox="0 0 10 8"><rect width="10" height="8" rx="1" fill="#e8e8e8"/><circle cx="5" cy="4" r="2.300" fill="#535353"/></svg>
<svg style="left:566px;top:252.500px" width="10" height="10" viewBox="0 0 9 9"><circle cx="4.500" cy="4.500" r="3.900" fill="none" stroke="#e4e4e4" stroke-width="1"/><path d="M1.700 7.300A3.900 3.900 0 0 1 7.300 1.700Z" fill="#e4e4e4"/></svg>
<div class="abs" style="left:575px;top:261px;width:2px;height:1.500px;background:#ddd"></div>
<svg style="left:585px;top:253px" width="10" height="8" viewBox="0 0 10 8"><path d="M0 .8C0 .4 .4 0 .8 0H3.600L4.600 1.200H9.200C9.600 1.200 10 1.600 10 2V7.200C10 7.600 9.600 8 9.200 8H.8C.4 8 0 7.600 0 7.200Z" fill="#e0e0e0"/></svg>
<svg style="left:605px;top:252.500px" width="9" height="9" viewBox="0 0 9 9"><rect x=".5" y=".5" width="8" height="8" rx=".8" fill="none" stroke="#e4e4e4" stroke-width="1"/><path d="M4.500 2.400V6.600M2.400 4.500H6.600" stroke="#e4e4e4" stroke-width="1.100"/></svg>
<svg style="left:625px;top:252px" width="8" height="10" viewBox="0 0 8 10"><path d="M0 1.600H8M2.800 1.600V.5H5.200V1.600" stroke="#8a8a8a" stroke-width="1" fill="none"/><path d="M.9 2.800H7.100L6.600 9.600H1.400Z" fill="#8a8a8a"/></svg>
<div class="abs" style="left:477px;top:267px;width:178px;height:5px;background:#4a4a4a"></div>
<div class="abs" style="left:560px;top:269px;width:14px;height:1px;background:#5c5c5c"></div>
</body></html>
